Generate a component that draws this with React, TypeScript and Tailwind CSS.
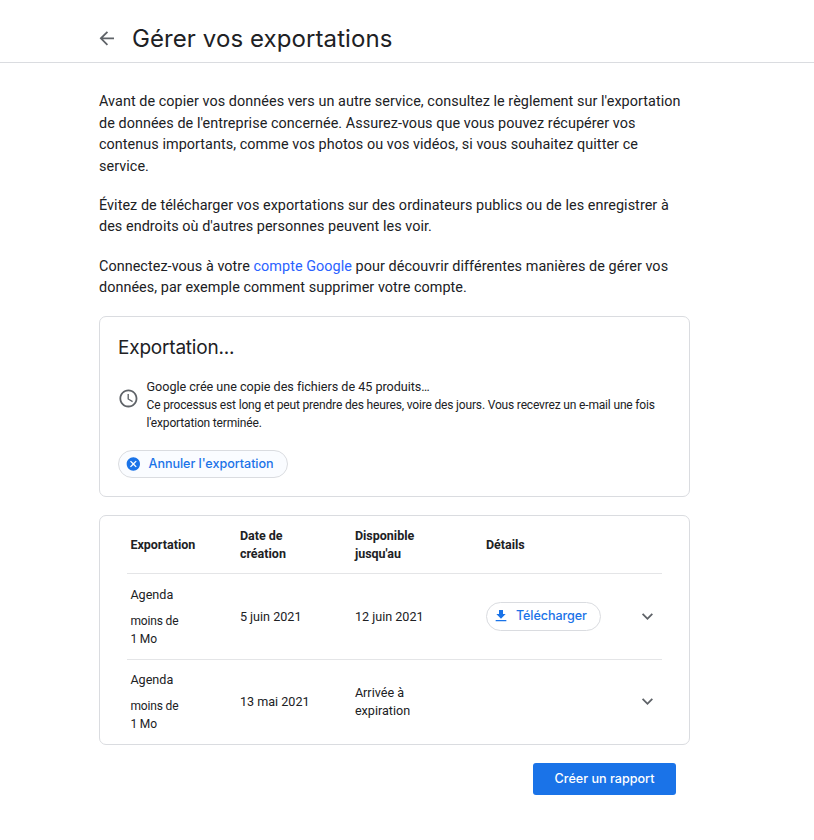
import type { ReactNode } from "react";

function Chevron() {
  return (
    <svg width="22" height="22" viewBox="-0.5 0 24 24" fill="#5f6368">
      <path d="M12 15.4 6 9.4l1.4-1.4 4.6 4.6 4.6-4.6L18 9.4z" />
    </svg>
  );
}

function Clock() {
  return (
    <svg className="overflow-visible" width="21.6" height="21.6" viewBox="-0.7 -0.7 24 24" fill="#5f6368">
      <path d="M11.99 2C6.47 2 2 6.48 2 12s4.47 10 9.99 10C17.52 22 22 17.52 22 12S17.52 2 11.99 2zM12 20c-4.42 0-8-3.58-8-8s3.58-8 8-8 8 3.58 8 8-3.58 8-8 8zm.5-13H11v6l5.25 3.15.75-1.23-4.5-2.67z" />
    </svg>
  );
}

function Row({ date, until, action }: { date: string; until: ReactNode; action?: ReactNode }) {
  return (
    <div className="grid h-full grid-cols-[109.5px_115px_131px_1fr_37px] items-center pl-[3.4px]">
      <div>
        <div>Agenda</div>
        <div className="mt-2 text-[12px] tracking-[-0.15px]">
          moins de
          <br />1 Mo
        </div>
      </div>
      <div>{date}</div>
      <div>{until}</div>
      <div>{action}</div>
      <div className="pl-[11px]">
        <Chevron />
      </div>
    </div>
  );
}

export default function App() {
  return (
    <div className="h-[840px] w-[814px] overflow-hidden bg-white font-['Roboto','Noto_Sans',sans-serif] text-[#202124]">
      <header className="flex h-[63px] items-center border-b border-[#dadce0] pt-[15px] pl-[96px]">
        <svg className="-mt-px" width="21.6" height="21.6" viewBox="0 -0.6 24 24" fill="#5f6368">
          <path d="M20 11H7.83l5.59-5.59L12 4l-8 8 8 8 1.41-1.41L7.83 13H20v-2z" />
        </svg>
        <h1 className="mt-px ml-[14.4px] font-['Inter','Open_Sans',sans-serif] text-[24px] leading-8 tracking-[0.09px] whitespace-nowrap">
          Gérer vos exportations
        </h1>
      </header>

      <main className="ml-[99px] w-[591px] pt-[28px]">
        <div className="space-y-[17.8px] text-[14.4px] leading-[21.5px] tracking-[0.055px] whitespace-nowrap">
          <p>
            Avant de copier vos données vers un autre service, consultez le règlement sur l'exportation
            <br />
            de données de l'entreprise concernée. Assurez-vous que vous pouvez récupérer vos
            <br />
            contenus importants, comme vos photos ou vos vidéos, si vous souhaitez quitter ce
            <br />
            service.
          </p>
          <p>
            Évitez de télécharger vos exportations sur des ordinateurs publics ou de les enregistrer à
            <br />
            des endroits où d'autres personnes peuvent les voir.
          </p>
          <p>
            Connectez-vous à votre <a className="text-[#2962ff]">compte Google</a> pour découvrir différentes manières de gérer vos
            <br />
            données, par exemple comment supprimer votre compte.
          </p>
        </div>

        <section className="mt-[17.6px] h-[181px] rounded-[7px] border border-[#dadce0] px-[18px] pt-[18px]">
          <h2 className="font-['Inter','Open_Sans',sans-serif] text-[19px] leading-[26px] tracking-[-0.2px]">Exportation...</h2>
          <div className="mt-[17px] flex gap-[7.6px] text-[12.6px] leading-[18px] tracking-[-0.02px] whitespace-nowrap">
            <div className="-ml-[0.7px] pt-[9.2px]">
              <Clock />
            </div>
            <div>
              <div>Google crée une copie des fichiers de 45 produits…</div>
              <div className="text-[12px] tracking-[-0.165px]">
                Ce processus est long et peut prendre des heures, voire des jours. Vous recevrez un e-mail une fois
                <br />
                l'exportation terminée.
              </div>
            </div>
          </div>
          <button className="mt-[18px] flex h-[28px] w-[170px] items-center rounded-full border border-[#dadce0] bg-[#fafcff] pl-[6px] font-['Inter','Open_Sans',sans-serif] text-[12.6px] font-medium tracking-[-0.05px] whitespace-nowrap text-[#1a73e8]">
            <svg width="16" height="16" viewBox="-0.5 0 24 24" fill="#1a73e8">
              <path d="M12 2C6.47 2 2 6.47 2 12s4.47 10 10 10 10-4.47 10-10S17.53 2 12 2zm5 13.59L15.59 17 12 13.41 8.41 17 7 15.59 10.59 12 7 8.41 8.41 7 12 10.59 15.59 7 17 8.41 13.41 12 17 15.59z" />
            </svg>
            <span className="ml-[7.5px]">Annuler l'exportation</span>
          </button>
        </section>

        <section className="mt-[18px] h-[230px] rounded-[7px] border border-[#dadce0] px-[27px] text-[12.6px] leading-[18px] whitespace-nowrap">
          <div className="grid h-[58px] grid-cols-[109.5px_115px_131px_1fr] items-center border-b border-[#e4e5e7] pl-[3.4px] text-[12.5px] font-bold">
            <div>Exportation</div>
            <div>
              Date de
              <br />
              création
            </div>
            <div>
              Disponible
              <br />
              jusqu'au
            </div>
            <div>Détails</div>
          </div>
          <div className="h-[85px]">
            <Row
              date="5 juin 2021"
              until="12 juin 2021"
              action={
                <button className="flex h-[29px] w-[115px] items-center rounded-full border border-[#dadce0] pb-px pl-[6px] font-['Inter','Open_Sans',sans-serif] text-[12.6px] font-medium tracking-[-0.08px] text-[#1a73e8]">
                  <svg width="16" height="16" viewBox="0 0 24 24" fill="#1a73e8">
                    <path d="M19 9h-4V3H9v6H5l7 7 7-7zM4 18v2h16v-2H4z" />
                  </svg>
                  <span className="ml-[7px]">Télécharger</span>
                </button>
              }
            />
          </div>
          <div className="h-[84px] border-t border-[#e4e5e7]">
            <Row
              date="13 mai 2021"
              until={
                <>
                  Arrivée à
                  <br />
                  expiration
                </>
              }
            />
          </div>
        </section>

        <button className="mt-[18px] ml-[434px] h-[32px] w-[143px] rounded-[3px] bg-[#1a73e8] font-['Inter','Open_Sans',sans-serif] text-[12.6px] font-medium text-white">
          Créer un rapport
        </button>
      </main>
    </div>
  );
}
